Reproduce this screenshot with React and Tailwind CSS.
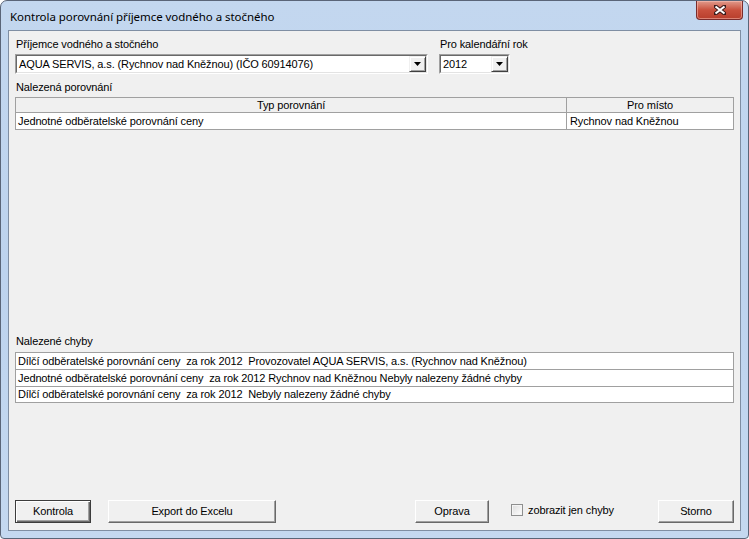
import React from "react";

const font = { fontFamily: '"Liberation Sans", Arial, sans-serif', letterSpacing: "-0.12px" };

function ArrowBtn() {
  return (
    <div className="w-[17px] h-full bg-[#f0f0f0] border-t border-l border-t-[#f0f0f0] border-l-[#f0f0f0] border-b border-r border-b-[#404040] border-r-[#404040] flex items-center justify-center shadow-[inset_1px_1px_0_#ffffff,inset_-1px_-1px_0_#a0a0a0]">
      <svg width="7" height="4" viewBox="0 0 7 4">
        <path d="M0 0H7L3.5 4Z" fill="#000" />
      </svg>
    </div>
  );
}

function Combo({ text, className }) {
  return (
    <div className={"h-[20px] bg-white border border-t-[#a0a0a0] border-l-[#a0a0a0] border-b-white border-r-white flex " + className}>
      <div className="flex-1 flex border border-t-[#696969] border-l-[#696969] border-b-[#e3e3e3] border-r-[#e3e3e3]">
        <div className="flex-1 pl-[2px] flex items-center text-[11px] text-black leading-none whitespace-nowrap overflow-hidden">
          {text}
        </div>
        <ArrowBtn />
      </div>
    </div>
  );
}

function Btn({ children, w, def }) {
  return (
    <div
      className={
        "h-[23px] flex items-center justify-center text-[11px] text-black bg-[#f0f0f0] " +
        w +
        (def
          ? " border border-[#3c3c3c] shadow-[inset_1px_1px_0_#ffffff,inset_-1px_-1px_0_#696969,inset_-2px_-2px_0_#a0a0a0]"
          : " border border-t-white border-l-white border-b-[#696969] border-r-[#696969] shadow-[inset_-1px_-1px_0_#a0a0a0]")
      }
    >
      {children}
    </div>
  );
}

export default function App() {
  return (
    <div className="w-[749px] h-[539px] bg-white" style={font}>
      <div className="w-[749px] h-[539px] flex flex-col rounded-t-[7px] rounded-b-[4px] border border-[#5a6578] bg-gradient-to-b from-[#c3d7ef] via-[#bdd3ee] to-[#c4d8f0] px-[7px] pb-[7px]">
        {/* title bar */}
        <div className="h-[29px] relative flex items-center pl-[2px] pt-[2px]">
          <span
            className="text-black whitespace-nowrap"
            style={{ fontFamily: '"Noto Sans", "Open Sans", sans-serif', fontSize: "11.5px", letterSpacing: "-0.05px" }}
          >
            Kontrola porovnání příjemce vodného a stočného
          </span>
          <div className="absolute right-[-2px] top-0 w-[47px] h-[19px] rounded-b-[4px] border border-t-0 border-[#7a2c2c] bg-gradient-to-b from-[#e09a8c] via-[#c9503d] to-[#b83e2c] flex items-center justify-center shadow-[inset_0_0_0_1px_rgba(255,200,190,0.5)]">
            <svg width="12" height="10" viewBox="0 0 12 10">
              <path
                d="M1 1L11 9M11 1L1 9"
                stroke="#3a1a1a"
                strokeWidth="4"
                strokeLinecap="square"
              />
              <path d="M1.5 1.5L10.5 8.5M10.5 1.5L1.5 8.5" stroke="#ffffff" strokeWidth="2.2" />
            </svg>
          </div>
        </div>
        {/* client */}
        <div className="flex-1 border border-[#7f8ea3] bg-[#f0f0f0] flex flex-col px-[6px] pt-[7px] pb-[7px] text-[11px] text-black">
          <div className="flex">
            <div className="flex flex-col w-[413px]">
              <div className="h-[13px] leading-[13px] pl-[1px]">Příjemce vodného a stočného</div>
              <Combo className="mt-[3px] w-[413px]" text="AQUA SERVIS, a.s. (Rychnov nad Kněžnou) (IČO 60914076)" />
            </div>
            <div className="flex flex-col ml-[11px]">
              <div className="h-[13px] leading-[13px] pl-[1px]">Pro kalendářní rok</div>
              <Combo className="mt-[3px] w-[71px]" text="2012" />
            </div>
          </div>
          <div className="mt-[7px] h-[13px] leading-[13px] pl-[1px]">Nalezená porovnání</div>
          <div className="mt-[3px] h-[238px] flex flex-col">
            <div className="flex h-[16px] border border-[#a0a0a0] bg-[#f0f0f0]">
              <div className="w-[551px] border-r border-[#a0a0a0] flex items-center justify-center leading-none">Typ porovnání</div>
              <div className="flex-1 flex items-center justify-center leading-none">Pro místo</div>
            </div>
            <div className="flex h-[17px] border border-t-0 border-[#a0a0a0] bg-white">
              <div className="w-[551px] border-r border-[#a0a0a0] flex items-center pl-[2px] leading-none">Jednotné odběratelské porovnání ceny</div>
              <div className="flex-1 flex items-center pl-[3px] leading-none">Rychnov nad Kněžnou</div>
            </div>
          </div>
          <div className="h-[13px] leading-[13px] pl-[1px]">Nalezené chyby</div>
          <div className="mt-[4px] border border-[#a0a0a0] bg-white flex flex-col">
            <div className="h-[17px] flex items-center pl-[2px] leading-none border-b border-[#a0a0a0] whitespace-pre">Dílčí odběratelské porovnání ceny  za rok 2012  Provozovatel AQUA SERVIS, a.s. (Rychnov nad Kněžnou)</div>
            <div className="h-[17px] flex items-center pl-[2px] leading-none border-b border-[#a0a0a0] whitespace-pre">Jednotné odběratelské porovnání ceny  za rok 2012 Rychnov nad Kněžnou Nebyly nalezeny žádné chyby</div>
            <div className="h-[15px] flex items-center pl-[2px] leading-none whitespace-pre">Dílčí odběratelské porovnání ceny  za rok 2012  Nebyly nalezeny žádné chyby</div>
          </div>
          <div className="flex-1" />
          <div className="flex items-center">
            <Btn w="w-[76px]" def>Kontrola</Btn>
            <div className="ml-[17px]">
              <Btn w="w-[168px]">Export do Excelu</Btn>
            </div>
            <div className="ml-[139px]">
              <Btn w="w-[74px]">Oprava</Btn>
            </div>
            <div className="ml-[22px] w-[12px] h-[12px] border border-[#8e8f8f] bg-gradient-to-br from-[#dcdcdc] to-[#ffffff] shadow-[inset_0_0_0_1px_#f4f4f4] mb-[4px]" />
            <div className="ml-[5px] mb-[2px] leading-none">zobrazit jen chyby</div>
            <div className="flex-1" />
            <Btn w="w-[76px]">Storno</Btn>
          </div>
        </div>
      </div>
    </div>
  );
}
